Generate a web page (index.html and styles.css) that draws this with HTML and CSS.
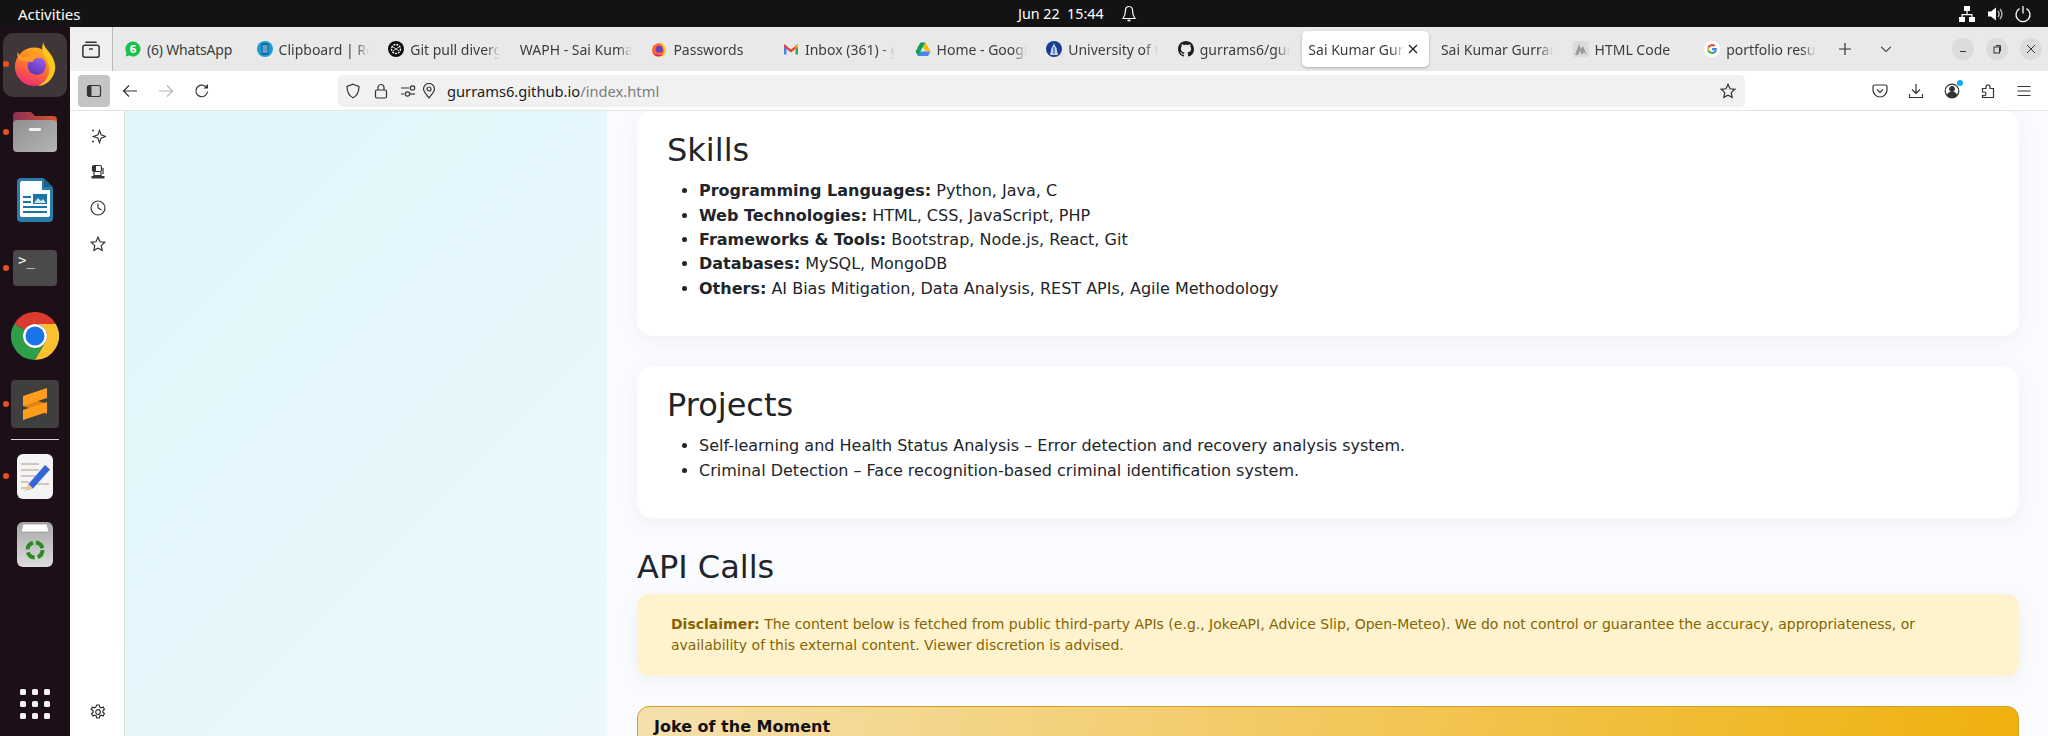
FILE: index.html
```html
<!DOCTYPE html>
<html>
  <head>
    <meta charset="UTF-8" />
    <title>Sai Kumar Gurram</title>
    <link rel="stylesheet" href="styles.css">
  </head>
  <body>
    <div class="topbar">
      <span class="activities">Activities</span>
      <div class="clock">
        <span>Jun 22&nbsp; 15:44</span>
        <svg class="bell" width="16" height="18" viewBox="0 0 16 18"><path d="M8 1.5c-2.6 0-3.6 2-3.6 4.5 0 3.500-.8 5.500-2.400 7.500h12c-1.600-2-2.400-4-2.400-7.500 0-2.500-1-4.500-3.600-4.500z" fill="none" stroke="#fff" stroke-width="1.200"/><path d="M6.500 15.500h3" stroke="#fff" stroke-width="1.600"/></svg>
      </div>
      <div class="tray">
        <svg width="18" height="18" viewBox="0 0 18 18" fill="#fff"><rect x="6" y="1" width="6" height="5"/><rect x="1" y="12" width="6" height="5"/><rect x="11" y="12" width="6" height="5"/><path d="M8.400 6h1.200v3H14.500v3h-1.200v-1.800H4.700V12H3.500V9h4.900z"/></svg>
        <svg width="18" height="18" viewBox="0 0 18 18" fill="#fff"><path d="M2 6.500h3L10 2.500v13L5 11.500H2z"/><path d="M12 6c1.300 1.700 1.300 4.300 0 6M14 4c2.400 3 2.400 7 0 10" fill="none" stroke="#bbb" stroke-width="1.300"/></svg>
        <svg width="18" height="18" viewBox="0 0 18 18" fill="none" stroke="#fff" stroke-width="1.300"><path d="M5.500 3.600a7 7 0 1 0 7 0"/><path d="M9 1v7.500"/></svg>
      </div>
    </div>

    <div class="desktop">
      <div class="dock">
        <div class="dock-item active running">
          <svg width="44" height="46" viewBox="0 0 48 50">
            <defs>
              <linearGradient id="foxBody" x1="0.700" y1="0" x2="0.300" y2="1"><stop offset="0" stop-color="#ffb21f"/><stop offset="0.450" stop-color="#ff7a26"/><stop offset="1" stop-color="#ee2a78"/></linearGradient>
              <linearGradient id="foxCore" x1="0.800" y1="0" x2="0.300" y2="1"><stop offset="0" stop-color="#9b62ee"/><stop offset="1" stop-color="#5a35b8"/></linearGradient>
            </defs>
            <circle cx="23" cy="28" r="21" fill="url(#foxBody)"/>
            <path d="M33 1c0 7 12 13 13 26 .8 11-8 22-19 22 10-4 14-13 12-22-1.500-9-10-13-6-26z" fill="#ffc81f"/>
            <circle cx="26" cy="27" r="10" fill="url(#foxCore)"/>
            <path d="M5 12c2 6 7 6 12 5 5-4 13-3 17 3-6-3-11-1-13 3-5-2-11 0-14-3-2-2-3-5-2-8z" fill="#ff9a26"/>
          </svg>
        </div>
        <div class="dock-item running">
          <svg width="44" height="40" viewBox="0 0 44 40">
            <defs>
              <linearGradient id="folderTop" x1="0" y1="0" x2="1" y2="0"><stop offset="0" stop-color="#8c3058"/><stop offset="1" stop-color="#d9532b"/></linearGradient>
              <linearGradient id="folderFace" x1="0" y1="0" x2="1" y2="1"><stop offset="0" stop-color="#8f8f8f"/><stop offset="1" stop-color="#b5b5b5"/></linearGradient>
            </defs>
            <path d="M0 4q0-4 4-4h14l4 4h18q4 0 4 4v12H0z" fill="url(#folderTop)"/>
            <rect y="8" width="44" height="32" rx="4" fill="url(#folderFace)"/>
            <rect x="16" y="16" width="12" height="3" rx="1" fill="#f2f2f2"/>
          </svg>
        </div>
        <div class="dock-item">
          <svg width="36" height="44" viewBox="0 0 36 44">
            <path d="M4 0h22l10 10v30q0 4-4 4H4q-4 0-4-4V4q0-4 4-4z" fill="#2a7cab"/>
            <path d="M5 3h20v9h8v25q0 2-2 2H5q-2 0-2-2V5q0-2 2-2z" fill="#fff"/>
            <path d="M27 0l9 9h-9z" fill="#1d5f87"/>
            <path d="M6 18h8v2H6zM6 23h8v2H6zM6 28h24v2H6zM6 33h24v2H6z" fill="#1b75a8"/>
            <rect x="16" y="16" width="14" height="10" fill="#1b75a8"/>
            <path d="M17 25l4-5 3 3 2-2 3 4z" fill="#cfe4f0"/>
          </svg>
        </div>
        <div class="dock-item running">
          <div class="terminal"><span class="prompt">&gt;_</span></div>
        </div>
        <div class="dock-item">
          <svg width="48" height="48" viewBox="0 0 48 48">
            <path d="M3.200 12A24 24 0 0 1 44.800 12H24A12 12 0 0 0 13.600 18Z" fill="#db3a2f"/>
            <path d="M3.200 12A24 24 0 0 0 24 48L34.400 30A12 12 0 0 1 13.600 18Z" fill="#2f9e48"/>
            <path d="M44.800 12A24 24 0 0 1 24 48L34.400 30A12 12 0 0 0 24 12Z" fill="#fbc02d"/>
            <circle cx="24" cy="24" r="12" fill="#fff"/>
            <circle cx="24" cy="24" r="9.500" fill="#1a73e8"/>
          </svg>
        </div>
        <div class="dock-item running">
          <div class="sublime">
            <svg width="24" height="32" viewBox="0 0 24 32"><path d="M0 8L24 16V26L0 18z" fill="#e8820f"/><path d="M24 0V10L0 18V8z" fill="#ff9d1c"/><path d="M24 14V24L0 32V22z" fill="#ff9d1c"/></svg>
          </div>
        </div>
        <div class="dock-sep"></div>
        <div class="dock-item running">
          <svg width="36" height="45" viewBox="0 0 36 45">
            <rect width="36" height="45" rx="6" fill="#f4f4f4"/>
            <path d="M4 9h18v2H4zM4 15h18v2H4zM4 21h14v2H4zM4 27h8v2H4zM4 33h6v2H4zM18 29h14v2H18z" fill="#cdc9bd"/>
            <path d="M28 11l5 4.500-17 19-6 1.500 1.500-6z" fill="#3465d8"/>
            <path d="M11.500 30l4.500 4.500-6 1.500-3 2z" fill="#f2c48d"/>
          </svg>
        </div>
        <div class="dock-item">
          <svg width="36" height="45" viewBox="0 0 36 45">
            <defs><linearGradient id="binFace" x1="0" y1="0" x2="0" y2="1"><stop offset="0" stop-color="#a8a8a8"/><stop offset="1" stop-color="#dcdcdc"/></linearGradient></defs>
            <rect width="36" height="45" rx="6" fill="url(#binFace)"/>
            <path d="M4 10l2-8h24l2 8z" fill="#fff" stroke="#888" stroke-width="0.600"/>
            <g fill="none" stroke="#2a8a24" stroke-width="4" stroke-dasharray="9 3"><circle cx="18" cy="28" r="7.500"/></g>
          </svg>
        </div>
        <div class="app-grid">
          <i></i><i></i><i></i><i></i><i></i><i></i><i></i><i></i><i></i>
        </div>
      </div>

      <div class="browser">
        <div class="tabbar">
          <div class="tabbar-start">
            <svg class="ico" viewBox="0 0 16 16"><rect x="1.500" y="5" width="13" height="9.500" rx="1.500"/><path d="M3.500 2.500h9M6.500 8h3"/></svg>
          </div>
          <div class="tabs">
            <div class="tab">
              <svg class="fav" viewBox="0 0 16 16"><path d="M8 .5a7.500 7.500 0 1 1-3.800 14L.5 15.500l1-3.600A7.500 7.500 0 0 1 8 .5z" fill="#1bc14a"/><text x="8" y="12" text-anchor="middle" class="fav-num">6</text></svg>
              <span class="tab-label tab-label-full">(6) WhatsApp</span>
            </div>
            <div class="tab">
              <svg class="fav" viewBox="0 0 16 16"><circle cx="8" cy="8" r="8" fill="#1d9ad6"/><rect x="4.500" y="2.500" width="7" height="11" rx="1" fill="#0b5f96"/><path d="M5.500 5h5M5.500 7h5M5.500 9h5M5.500 11h5" stroke="#bfe6f7"/></svg>
              <span class="tab-label">Clipboard | Re</span>
            </div>
            <div class="tab">
              <svg class="fav" viewBox="0 0 16 16"><circle cx="8" cy="8" r="8" fill="#0d0d0d"/><circle cx="8" cy="8" r="4.500" fill="none" stroke="#fff" stroke-width="1.400" stroke-dasharray="2 1"/><path d="M5 6l6 4M11 6l-6 4" stroke="#fff" stroke-width="0.800"/></svg>
              <span class="tab-label">Git pull diverg</span>
            </div>
            <div class="tab">
              <span class="tab-label">WAPH - Sai Kuma</span>
            </div>
            <div class="tab">
              <svg class="fav" viewBox="0 0 48 50"><circle cx="23" cy="28" r="21" fill="#ff6a2b"/><path d="M33 2c0 7 12 13 13 25 .8 11-8 21-19 22 10-4 14-13 12-22-1.500-9-10-13-6-25z" fill="#ffc81f"/><circle cx="25" cy="26" r="11" fill="#6b3fc4"/><path d="M5 38a21 21 0 0 0 30 6c-10 0-20-2-30-6z" fill="#e5187a"/></svg>
              <span class="tab-label">Passwords</span>
            </div>
            <div class="tab">
              <svg class="fav" viewBox="0 0 16 16"><path d="M1 13.500V4l2.500 0v9.500z" fill="#4285f4"/><path d="M12.500 13.500V4L15 4v9.500z" fill="#34a853"/><path d="M1 3l7 5.500L15 3v3L8 11.500 1 6z" fill="#ea4335"/><path d="M12.500 5l2.500-2v3l-2.500 2z" fill="#fbbc04"/></svg>
              <span class="tab-label">Inbox (361) - g</span>
            </div>
            <div class="tab">
              <svg class="fav" viewBox="0 0 16 16"><path d="M5.500 1.500h5L5 11 2.500 6.500z" fill="#0f9d58"/><path d="M10.500 1.500L15.500 10.500H10.500L8 6z" fill="#fbbc04"/><path d="M15.500 10.500L13 15H3l2.500-4.500z" fill="#4285f4"/><path d="M3 15L.5 10.500 3 6.500 5.500 11z" fill="#0f9d58"/></svg>
              <span class="tab-label">Home - Googl</span>
            </div>
            <div class="tab">
              <svg class="fav" viewBox="0 0 16 16"><circle cx="8" cy="8" r="8" fill="#173e8c"/><path d="M8 2l1 3c1.500 1 2 3 2 5l1 4H4l1-4c0-2 .5-4 2-5z" fill="#c6d6ee"/><path d="M8 6v7" stroke="#173e8c"/></svg>
              <span class="tab-label">University of t</span>
            </div>
            <div class="tab">
              <svg class="fav" viewBox="0 0 16 16"><path fill="#1b1f23" d="M8 0C3.580 0 0 3.580 0 8c0 3.540 2.290 6.530 5.470 7.590.4.070.55-.17.55-.38 0-.19-.01-.82-.01-1.490-2.010.37-2.530-.49-2.690-.94-.09-.23-.48-.94-.82-1.130-.28-.15-.68-.52-.01-.53.63-.01 1.080.58 1.230.82.720 1.210 1.870.87 2.330.66.070-.52.280-.87.510-1.070-1.780-.2-3.640-.89-3.640-3.950 0-.87.310-1.590.820-2.150-.08-.2-.36-1.020.08-2.120 0 0 .67-.21 2.200.82.640-.18 1.320-.27 2-.27s1.360.09 2 .27c1.530-1.040 2.200-.82 2.200-.82.44 1.100.16 1.920.08 2.120.51.56.82 1.270.82 2.150 0 3.070-1.870 3.750-3.650 3.950.29.250.54.730.54 1.480 0 1.070-.01 1.930-.01 2.200 0 .21.150.46.550.38A8.010 8.010 0 0 0 16 8c0-4.420-3.580-8-8-8z"/></svg>
              <span class="tab-label">gurrams6/gur</span>
            </div>
            <div class="tab tab-active">
              <span class="tab-label">Sai Kumar Gurram</span>
              <svg class="tab-close" viewBox="0 0 16 16"><path d="M4 4l8 8M12 4l-8 8"/></svg>
            </div>
            <div class="tab">
              <span class="tab-label">Sai Kumar Gurram</span>
            </div>
            <div class="tab">
              <svg class="fav" viewBox="0 0 16 16"><rect width="16" height="16" fill="#dcdcdc"/><path d="M2 14L6 3l2 5 2-3 4 9-3-3-2 3-2-4-2 4z" fill="#9a9a9a"/></svg>
              <span class="tab-label">HTML Code</span>
            </div>
            <div class="tab">
              <svg class="fav" viewBox="0 0 16 16"><circle cx="8" cy="8" r="8" fill="#fff"/><path d="M12.800 8.200c0-.4 0-.8-.1-1.100H8v2.100h2.700a2.300 2.300 0 0 1-1 1.500v1.300h1.600c1-.9 1.500-2.200 1.500-3.800z" fill="#4285f4"/><path d="M8 13c1.300 0 2.400-.4 3.300-1.200l-1.600-1.300c-.4.300-1 .5-1.700.5-1.300 0-2.400-.9-2.800-2H3.600v1.300A5 5 0 0 0 8 13z" fill="#34a853"/><path d="M5.200 9a3 3 0 0 1 0-2V5.700H3.600a5 5 0 0 0 0 4.600z" fill="#fbbc05"/><path d="M8 5c.7 0 1.400.3 1.900.7l1.400-1.400A5 5 0 0 0 3.600 5.700L5.200 7c.4-1.200 1.500-2 2.800-2z" fill="#ea4335"/></svg>
              <span class="tab-label">portfolio resume</span>
            </div>
          </div>
          <svg class="ico tab-plus" viewBox="0 0 16 16"><path d="M8 2v12M2 8h12"/></svg>
          <svg class="ico tab-list" viewBox="0 0 16 16"><path d="M2.500 5.500L8 11l5.500-5.500"/></svg>
          <div class="win-btns">
            <div class="win-btn"><svg class="ico-sm" viewBox="0 0 12 12"><path d="M3 8.500h6"/></svg></div>
            <div class="win-btn"><svg class="ico-sm" viewBox="0 0 12 12"><rect x="3" y="4" width="5.500" height="6"/><path d="M5 2.500h4.500v6"/></svg></div>
            <div class="win-btn"><svg class="ico-sm" viewBox="0 0 12 12"><path d="M2 2l8 8M10 2l-8 8"/></svg></div>
          </div>
        </div>

        <div class="toolbar">
          <div class="sidebar-btn">
            <svg class="ico" viewBox="0 0 16 16"><rect x="1.500" y="2.500" width="13" height="11" rx="2"/><rect x="1.500" y="2.500" width="4" height="11" rx="1.500" fill="#333" stroke="none"/></svg>
          </div>
          <div class="nav-btn"><svg class="ico" viewBox="0 0 16 16"><path d="M15 8H1.500M7 2.500L1.500 8 7 13.500"/></svg></div>
          <div class="nav-btn nav-off"><svg class="ico" viewBox="0 0 16 16"><path d="M1 8h13.500M9 2.500L14.500 8 9 13.500"/></svg></div>
          <div class="nav-btn"><svg class="ico" viewBox="0 0 16 16"><path d="M13.500 8.500a5.800 5.800 0 1 1-2-5"/><path d="M14 1v4.500H9.500z" fill="#333" stroke="none"/></svg></div>
          <div class="urlbar">
            <svg class="ico url-shield" viewBox="0 0 16 16"><path d="M8 1.200l6 2.200c0 5.500-1.500 9-6 11.400-4.500-2.400-6-5.900-6-11.400z"/></svg>
            <svg class="ico url-lock" viewBox="0 0 16 16"><rect x="2.500" y="7" width="11" height="8" rx="1.500"/><path d="M5 7V4.500a3 3 0 0 1 6 0V7"/></svg>
            <svg class="ico url-perm" viewBox="0 0 16 16"><path d="M1 5h8M1 11h3"/><circle cx="12.500" cy="5" r="2.200"/><circle cx="7.500" cy="11" r="2.200"/><path d="M10 11h5"/></svg>
            <svg class="ico url-pin" viewBox="0 0 16 16"><path d="M8 15C5 11 2.500 8.500 2.500 6a5.500 5.500 0 0 1 11 0c0 2.500-2.500 5-5.500 9z"/><circle cx="8" cy="6" r="2"/></svg>
            <span class="url-text">gurrams6.github.io<span class="url-path">/index.html</span></span>
            <svg class="ico url-star" viewBox="0 0 16 16"><path d="M8 1.300l2 4.500 4.800.5-3.600 3.300 1 4.800L8 12.100l-4.200 2.300 1-4.800L1.200 6.300 6 5.800z"/></svg>
          </div>
          <div class="tool-icons">
            <div class="tool-btn"><svg class="ico" viewBox="0 0 16 16"><path d="M2.500 2h11A1.500 1.500 0 0 1 15 3.500V7a7 7 0 0 1-14 0V3.500A1.500 1.500 0 0 1 2.500 2z"/><path d="M5 6.500l3 3 3-3"/></svg></div>
            <div class="tool-btn"><svg class="ico" viewBox="0 0 16 16"><path d="M8 1v9.500M4 6.500l4 4 4-4M1.500 11v3.500h13V11"/></svg></div>
            <div class="tool-btn">
              <svg class="ico" viewBox="0 0 16 16"><circle cx="8" cy="8" r="6.800"/><circle cx="8" cy="6" r="2.300" fill="#333"/><path d="M3.500 12c1-2 2.500-3 4.500-3s3.500 1 4.500 3c-1.200 1.300-2.700 2-4.500 2s-3.300-.7-4.500-2z" fill="#333"/></svg>
              <span class="sync-dot"></span>
            </div>
            <div class="tool-btn"><svg class="ico" viewBox="0 0 16 16"><path d="M5.500 14.500h8V5.500h-3.500V3.800a2 2 0 1 0-4 0V5.500H2.500v3.500h1.700a1.800 1.800 0 1 1 0 3.600H2.500v1.900z"/></svg></div>
            <div class="tool-btn"><svg class="ico" viewBox="0 0 16 16"><path d="M1.500 3.500h13M1.500 8h13M1.500 12.500h13"/></svg></div>
          </div>
        </div>

        <div class="content">
          <div class="side-panel">
            <svg class="ico side-ico" viewBox="0 0 16 16"><path d="M9.500 2.500l1.600 4.400 4.400 1.600-4.400 1.600-1.600 4.400-1.600-4.400-4.400-1.600 4.400-1.600z"/><circle cx="3" cy="2.500" r="1" fill="#333" stroke="none"/><circle cx="3" cy="13.500" r="1" fill="#333" stroke="none"/></svg>
            <svg class="ico side-ico" viewBox="0 0 16 16"><rect x="2.500" y="1.500" width="9" height="6" rx="1.500"/><rect x="2" y="2" width="4" height="5" fill="#333" stroke="none"/><path d="M4 8v3.500h7V8M13 4v6"/><rect x="1.500" y="12" width="13" height="2.500" fill="#333" stroke="none"/></svg>
            <svg class="ico side-ico" viewBox="0 0 16 16"><circle cx="8" cy="8" r="7"/><path d="M8 3.500V8l3.500 2"/></svg>
            <svg class="ico side-ico" viewBox="0 0 16 16"><path d="M8 1.300l2 4.500 4.800.5-3.600 3.300 1 4.800L8 12.100l-4.200 2.300 1-4.800L1.200 6.300 6 5.800z"/></svg>
            <svg class="ico side-ico side-gear" viewBox="0 0 16 16"><path d="M6.700 1h2.600l.4 2 1.500.8 1.900-.7 1.300 2.200-1.500 1.400v1.600l1.500 1.400-1.300 2.200-1.900-.7-1.500.8-.4 2H6.700l-.4-2-1.500-.8-1.900.7-1.300-2.200 1.500-1.400V6.700L1.100 5.300l1.300-2.200 1.900.7 1.500-.8z"/><circle cx="8" cy="8" r="2.300"/></svg>
          </div>

          <div class="page">
            <div class="hero-side"></div>
            <div class="main">
              <section class="card">
                <h2>Skills</h2>
                <ul>
                  <li><strong>Programming Languages:</strong> Python, Java, C</li>
                  <li><strong>Web Technologies:</strong> HTML, CSS, JavaScript, PHP</li>
                  <li><strong>Frameworks &amp; Tools:</strong> Bootstrap, Node.js, React, Git</li>
                  <li><strong>Databases:</strong> MySQL, MongoDB</li>
                  <li><strong>Others:</strong> AI Bias Mitigation, Data Analysis, REST APIs, Agile Methodology</li>
                </ul>
              </section>

              <section class="card">
                <h2>Projects</h2>
                <ul>
                  <li>Self-learning and Health Status Analysis – Error detection and recovery analysis system.</li>
                  <li>Criminal Detection – Face recognition-based criminal identification system.</li>
                </ul>
              </section>

              <h2 class="api-title">API Calls</h2>
              <div class="disclaimer">
                <strong>Disclaimer:</strong> The content below is fetched from public third-party APIs (e.g., JokeAPI, Advice Slip, Open-Meteo). We do not control or guarantee the accuracy, appropriateness, or availability of this external content. Viewer discretion is advised.
              </div>

              <div class="joke-card">
                <div class="joke-head">Joke of the Moment</div>
              </div>
            </div>
          </div>
        </div>
      </div>
    </div>
  </body>
</html>
```

FILE: styles.css
```css
* {
  box-sizing: border-box;
}

html,
body {
  margin: 0;
  height: 100%;
  overflow: hidden;
}

body {
  display: flex;
  flex-direction: column;
  font-family: "DejaVu Sans", sans-serif;
  color: #212529;
}

/* top bar */
.topbar {
  height: 27px;
  flex: none;
  display: flex;
  align-items: center;
  background: #131313;
  color: #fff;
  font-family: "Noto Sans", sans-serif;
  font-size: 14px;
  padding-left: 18px;
}

.activities {
  width: 999px;
  font-size: 15px;
}

.clock {
  display: flex;
  align-items: center;
  gap: 17px;
  padding-left: 1px;
  font-size: 14.300px;
}

.bell {
  display: block;
}

.tray {
  margin-left: auto;
  display: flex;
  gap: 10px;
  padding-right: 16px;
}

/* dock */
.desktop {
  flex: 1;
  display: flex;
  min-height: 0;
}

.dock {
  width: 70px;
  flex: none;
  display: flex;
  flex-direction: column;
  background: #1c0f17;
  padding-top: 3px;
  padding-bottom: 17px;
}

.dock-item {
  position: relative;
  height: 68px;
  flex: none;
  display: flex;
  align-items: center;
  justify-content: center;
}

.dock-item.active::before {
  content: "";
  position: absolute;
  left: 3px;
  top: 3px;
  width: 64px;
  height: 64px;
  border-radius: 10px;
  background: #3f363a;
}

.dock-item svg {
  position: relative;
}

.dock-item.running::after {
  content: "";
  position: absolute;
  left: 3px;
  top: 31px;
  width: 6px;
  height: 6px;
  border-radius: 50%;
  background: #e95420;
}

.dock-sep {
  height: 1px;
  margin: 1px 11px 2px;
  background: #d8d4d6;
  flex: none;
}

.terminal {
  width: 44px;
  height: 36px;
  border-radius: 4px;
  background: #4a4a4a;
  color: #fff;
  font-family: "DejaVu Sans Mono", monospace;
  font-size: 14px;
  line-height: 14px;
  padding: 3px 5px;
}

.sublime {
  width: 48px;
  height: 48px;
  border-radius: 4px;
  background: #3f3f3f;
  display: flex;
  align-items: center;
  justify-content: center;
}

.app-grid {
  margin-top: auto;
  margin-left: 20px;
  display: grid;
  grid-template-columns: repeat(3, 6px);
  gap: 6px;
}

.app-grid i {
  height: 6px;
  border-radius: 1.500px;
  background: #f2f2f2;
}

/* browser */
.browser {
  flex: 1;
  min-width: 0;
  display: flex;
  flex-direction: column;
}

.ico {
  width: 16px;
  height: 16px;
  flex: none;
  fill: none;
  stroke: #333;
  stroke-width: 1.200;
}

.ico-sm {
  width: 12px;
  height: 12px;
  fill: none;
  stroke: #333;
  stroke-width: 1;
}

.tabbar {
  height: 44px;
  flex: none;
  display: flex;
  align-items: center;
  background: #e9e9e9;
  font-family: "Noto Sans", sans-serif;
  font-size: 14px;
  color: #3d3d3d;
}

.tabbar-start {
  width: 43px;
  height: 44px;
  flex: none;
  display: flex;
  align-items: center;
  justify-content: center;
  background: #efefef;
  border-right: 1px solid #b9b9b9;
}

.tabbar-start .ico {
  width: 20px;
  height: 20px;
}

.tabs {
  display: flex;
  margin-left: 7px;
}

.tab {
  width: 131.600px;
  height: 36px;
  flex: none;
  display: flex;
  align-items: center;
  gap: 6px;
  padding: 0 14.600px 0 5px;
}

.tab-active {
  width: 126.600px;
  margin: 0 7px 0 -2px;
  padding: 0 7.600px 0 6px;
  background: #fff;
  border-radius: 5px;
  box-shadow: 0 1px 3px rgba(0, 0, 0, 0.25);
  gap: 0;
}

.fav {
  width: 16px;
  height: 16px;
  flex: none;
}

.fav-num {
  font-family: "DejaVu Sans", sans-serif;
  font-size: 10px;
  font-weight: bold;
  fill: #fff;
}

.tab-label {
  flex: 1;
  min-width: 0;
  overflow: hidden;
  white-space: nowrap;
  -webkit-mask-image: linear-gradient(to left, transparent, #000 14px);
  mask-image: linear-gradient(to left, transparent, #000 14px);
}

.tab-label-full {
  overflow: visible;
  -webkit-mask-image: none;
  mask-image: none;
  letter-spacing: -0.200px;
}

.tab-close {
  width: 16px;
  height: 16px;
  flex: none;
  fill: none;
  stroke: #222;
  stroke-width: 1.300;
}

.tab-plus {
  margin-left: 6px;
}

.tab-list {
  margin-left: 26px;
  width: 14px;
}

.win-btns {
  margin-left: auto;
  display: flex;
  gap: 12px;
  padding-right: 6px;
}

.win-btn {
  width: 22px;
  height: 22px;
  border-radius: 50%;
  background: #dcdcdc;
  display: flex;
  align-items: center;
  justify-content: center;
}

.toolbar {
  height: 40px;
  flex: none;
  display: flex;
  align-items: center;
  padding-left: 8px;
  background: #fff;
  border-bottom: 1px solid #e4e4e4;
}

.sidebar-btn {
  width: 32px;
  height: 32px;
  flex: none;
  border-radius: 4px;
  background: #c4c4c4;
  display: flex;
  align-items: center;
  justify-content: center;
}

.nav-btn {
  width: 36px;
  flex: none;
  display: flex;
  justify-content: center;
}

.sidebar-btn + .nav-btn {
  margin-left: 2px;
}

.nav-off .ico {
  stroke: #b5b5b5;
}

.urlbar {
  width: 1407px;
  height: 32px;
  margin-left: 118px;
  flex: none;
  display: flex;
  align-items: center;
  padding: 0 9px 0 7px;
  border-radius: 5px;
  background: #f1f1f1;
  font-family: "Noto Sans", sans-serif;
  font-size: 14.700px;
  color: #1c1c1c;
}

.url-lock {
  margin-left: 12px;
}

.url-perm {
  margin-left: 11px;
}

.url-pin {
  margin-left: 5px;
}

.url-text {
  margin-left: 10px;
}

.url-path {
  color: #7d7d7d;
}

.url-star {
  margin-left: auto;
}

.tool-icons {
  display: flex;
  margin-left: 117px;
}

.tool-btn {
  position: relative;
  width: 36px;
  flex: none;
  display: flex;
  justify-content: center;
}

.sync-dot {
  position: absolute;
  top: -3px;
  left: 23px;
  width: 6px;
  height: 6px;
  border-radius: 50%;
  background: #12a9f5;
}

/* page */
.content {
  flex: 1;
  min-height: 0;
  display: flex;
}

.side-panel {
  width: 55px;
  flex: none;
  display: flex;
  flex-direction: column;
  align-items: center;
  padding: 7px 0 6px 2px;
  background: #fff;
  border-right: 1px solid #e0e0e0;
}

.side-ico {
  height: 36px;
  flex: none;
}

.side-gear {
  margin-top: auto;
}

.page {
  flex: 1;
  min-width: 0;
  display: flex;
  overflow: hidden;
  background: #fafbfe;
}

.hero-side {
  width: 482px;
  flex: none;
  background: linear-gradient(135deg, #e0f6fa, #ebf9fe);
}

.main {
  flex: 1;
  min-width: 0;
  padding: 0 29px 0 30px;
}

h2 {
  margin: 0;
  font-size: 32px;
  font-weight: 400;
  line-height: 38.400px;
}

.card {
  padding: 20px 30px 0;
  height: 225px;
  margin-bottom: 30px;
  background: #fff;
  border-radius: 16px;
  box-shadow: 0 4px 20px rgba(0, 0, 0, 0.05);
}

.card + .card {
  height: 152px;
}

ul {
  margin: 10px 0 0;
  padding-left: 32px;
}

li {
  font-size: 16px;
  line-height: 24.330px;
}

.api-title {
  margin-bottom: 8px;
}

.disclaimer {
  padding: 20px 34px;
  margin-bottom: 30px;
  border-radius: 12px;
  background: #fff3cd;
  color: #856404;
  font-size: 14px;
  line-height: 20.700px;
  box-shadow: 0 4px 20px rgba(0, 0, 0, 0.05);
}

.joke-card {
  border: 1px solid #cfa12c;
  border-radius: 12px;
  overflow: hidden;
  height: 200px;
  background: linear-gradient(100deg, #f5e0ae, #f0b00a);
}

.joke-head {
  padding: 8px 16px;
  font-size: 16px;
  font-weight: bold;
  line-height: 24px;
  color: #111;
}
```
